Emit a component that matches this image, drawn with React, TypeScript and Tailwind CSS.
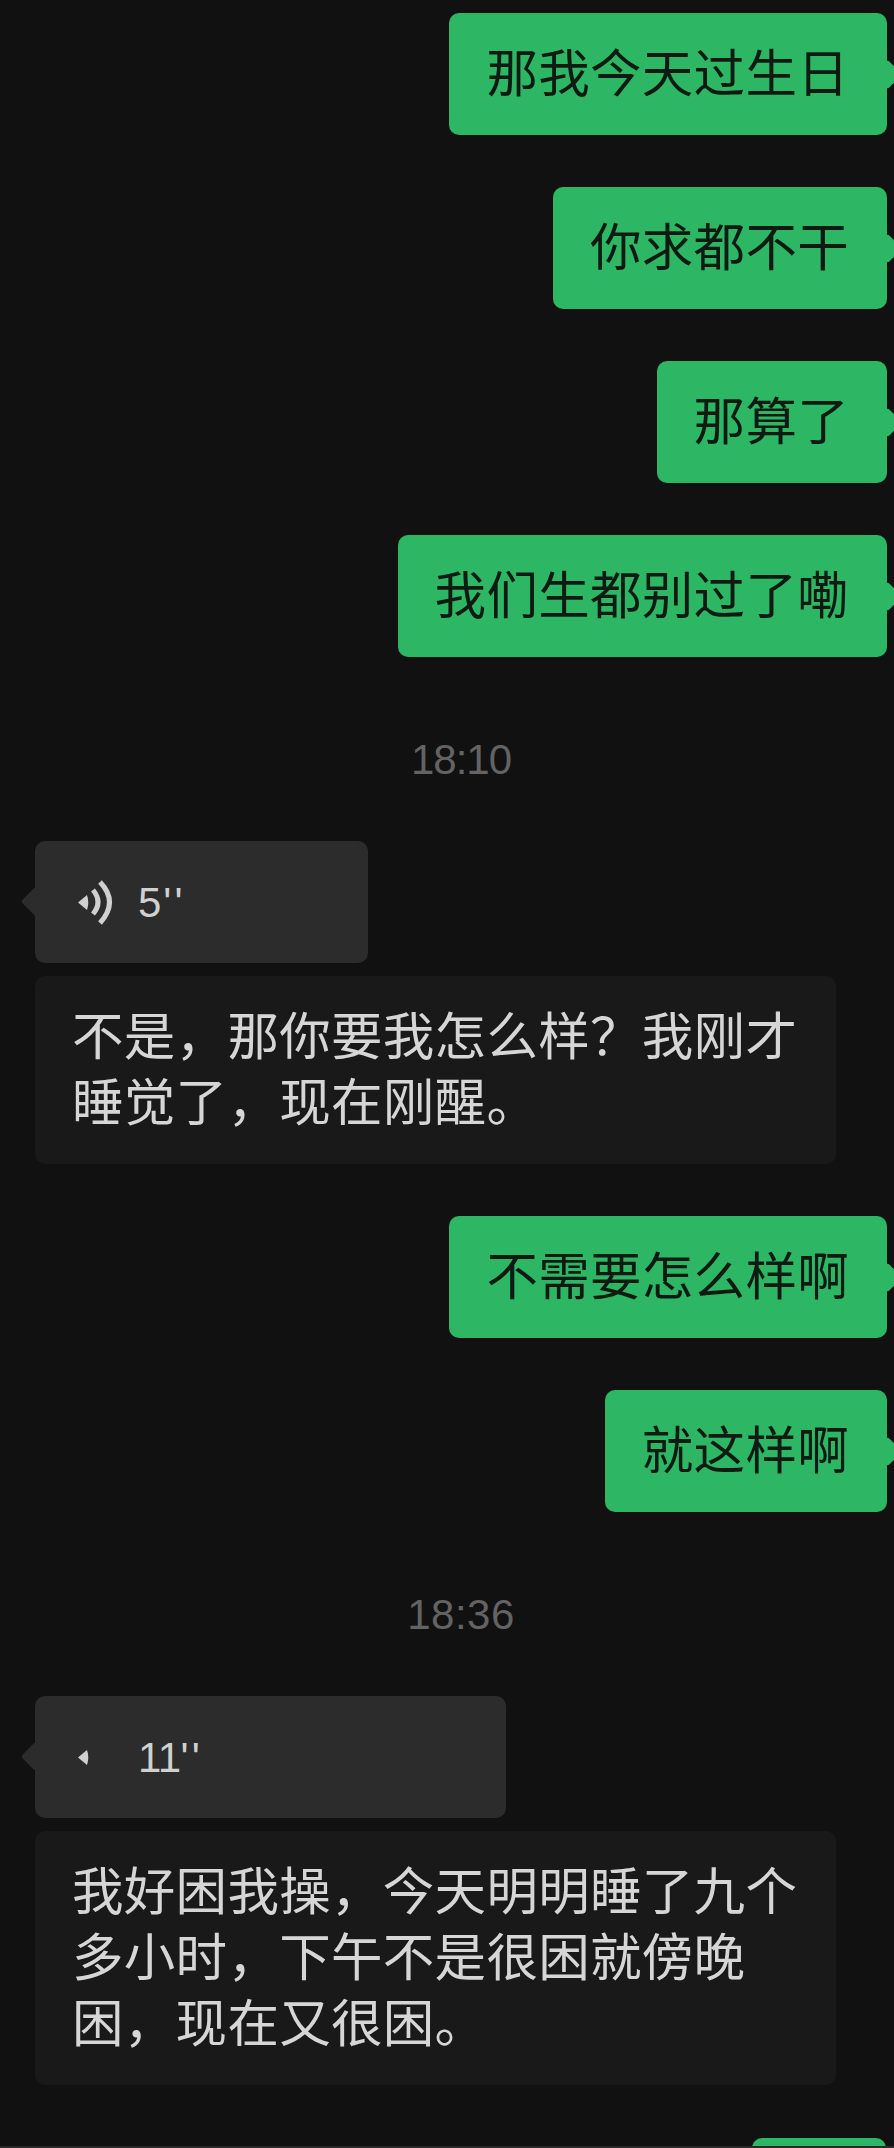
import * as React from "react";

const cjk = "font-['Noto_Sans_CJK_SC','Noto_Sans',sans-serif]";

function Sent(props: { text?: string; className?: string }) {
  return (
    <div className={"relative mr-[7px] shrink-0 self-end rounded-[10px] bg-[#2db664] pl-[37px] pr-[38px] pt-[24px] pb-[32px] " + (props.className ?? "")}>
      <div className={cjk + " whitespace-nowrap text-[51.5px] leading-[66px] tracking-[0.3px] text-[#0f1a12]"}>{props.text}</div>
      <div className="absolute -right-[11px] top-[51px] h-[21px] w-[21px] rotate-45 rounded-[3px] bg-[#2db664]" />
    </div>
  );
}

function Received(props: { lines: string[]; className?: string }) {
  return (
    <div className={"ml-[35px] w-[801px] shrink-0 rounded-[10px] bg-[#191919] px-[37px] pt-[24px] pb-[32px] " + (props.className ?? "")}>
      {props.lines.map((line) => (
        <div key={line} className={cjk + " whitespace-nowrap text-[51.5px] leading-[66px] tracking-[0.3px] text-[#d6d6d6]"}>
          {line}
        </div>
      ))}
    </div>
  );
}

function Voice(props: { seconds: number; className: string; digitClass: string; arcs?: boolean }) {
  return (
    <div className={"relative ml-[35px] flex h-[122px] shrink-0 items-center gap-[23px] rounded-[10px] bg-[#2c2c2c] pl-[40px] " + props.className}>
      <div className="absolute -left-[10px] top-[50px] h-[21px] w-[21px] rotate-45 rounded-[3px] bg-[#2c2c2c]" />
      <svg width="40" height="50" viewBox="0 0 40 50" fill="none" className="relative">
        <path d="M3 25.5 L12 18 Q14.500 25.500 12 33 Z" fill="#d0d0d0" />
        {props.arcs && (
          <>
            <path d="M18 13 Q28 25 18 37" stroke="#d0d0d0" strokeWidth="5" />
            <path d="M25 5 Q44 25 25 46" stroke="#d0d0d0" strokeWidth="5" />
          </>
        )}
      </svg>
      <span className="font-['Liberation_Sans',sans-serif] text-[42px] text-[#d0d0d0]">
        <span className={props.digitClass}>{props.seconds}</span>
        <span className="tracking-[3px]">''</span>
      </span>
    </div>
  );
}

function Time(props: { value: string; className: string }) {
  return (
    <div className={"shrink-0 pl-[28px] pt-[68px] pb-[46px] text-center font-['Liberation_Sans',sans-serif] text-[42px] leading-[70px] text-[#636363] " + props.className}>
      {props.value}
    </div>
  );
}

export default function App() {
  return (
    <div className="flex h-[2148px] w-[894px] flex-col overflow-hidden border-b-2 border-[#2a2a2a] bg-[#111112] pt-[13px]">
      <Sent text="那我今天过生日" />
      <Sent text="你求都不干" className="mt-[52px]" />
      <Sent text="那算了" className="mt-[52px]" />
      <Sent text="我们生都别过了嘞" className="mt-[52px]" />
      <Time value="18:10" className="tracking-[-1px]" />
      <Voice seconds={5} className="w-[333px]" digitClass="tracking-[2px]" arcs />
      <Received lines={["不是，那你要我怎么样？我刚才", "睡觉了，现在刚醒。"]} className="mt-[13px]" />
      <Sent text="不需要怎么样啊" className="mt-[52px]" />
      <Sent text="就这样啊" className="mt-[52px]" />
      <Time value="18:36" className="tracking-[0.5px]" />
      <Voice seconds={11} className="w-[471px]" digitClass="tracking-[-0.5px]" />
      <Received lines={["我好困我操，今天明明睡了九个", "多小时，下午不是很困就傍晚", "困，现在又很困。"]} className="mt-[13px]" />
      <div className="mt-[53px] mr-[8px] h-[60px] w-[134px] shrink-0 self-end rounded-[10px] bg-[#2db664]" />
    </div>
  );
}
